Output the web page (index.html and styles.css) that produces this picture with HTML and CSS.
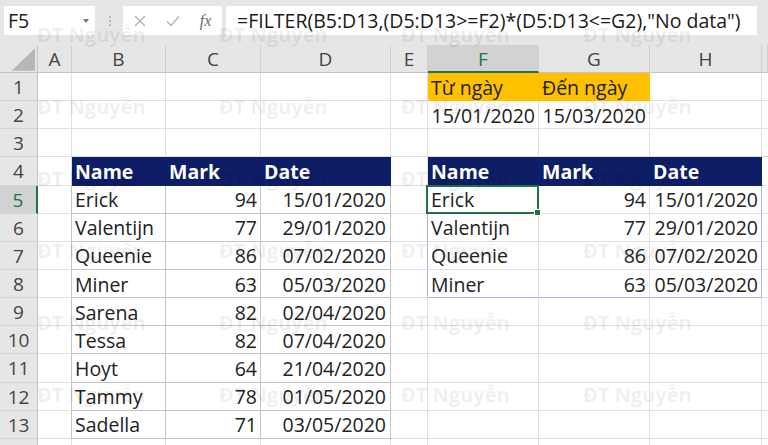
FILE: index.html
```html
<!DOCTYPE html>
<html lang="vi">
<head>
<meta charset="utf-8">
<title>FILTER</title>
<link rel="stylesheet" href="styles.css">
</head>
<body>
<div class="app">
  <div class="fbar">
    <div class="namebox"><span class="nb-text">F5</span><span class="nb-arrow"></span></div>
    <div class="sep"><i></i><i></i><i></i></div>
    <div class="fxbox">
      <span class="slot"><svg width="14" height="14" viewBox="0 0 14 14"><path d="M2 2 L12 12 M12 2 L2 12" stroke="#b4b4b4" stroke-width="1.4" fill="none"/></svg></span>
      <span class="slot"><svg width="16" height="14" viewBox="0 0 16 14"><path d="M2 7.5 L6 11.5 L14 2.5" stroke="#b4b4b4" stroke-width="1.4" fill="none"/></svg></span>
      <span class="slot fx">fx</span>
    </div>
    <div class="formula">=FILTER(B5:D13,(D5:D13&gt;=F2)*(D5:D13&lt;=G2),"No data")</div>
  </div>

  <div class="sheet">
    <!-- header -->
    <div class="ch corner"><svg width="38" height="27" viewBox="0 0 38 27"><polygon points="12,26 36,3 36,26" fill="#b7b7b7"/></svg></div>
    <div class="ch">A</div><div class="ch">B</div><div class="ch">C</div><div class="ch">D</div><div class="ch">E</div>
    <div class="ch csel">F</div><div class="ch">G</div><div class="ch">H</div><div class="ch"></div>

    <!-- 1 -->
    <div class="rh">1</div><div class="c"></div><div class="c"></div><div class="c"></div><div class="c"></div><div class="c"></div>
    <div class="c or">Từ ngày</div><div class="c or">Đến ngày</div><div class="c"></div><div class="c"></div>
    <!-- 2 -->
    <div class="rh">2</div><div class="c"></div><div class="c"></div><div class="c"></div><div class="c"></div><div class="c"></div>
    <div class="c r">15/01/2020</div><div class="c r">15/03/2020</div><div class="c"></div><div class="c"></div>
    <!-- 3 -->
    <div class="rh">3</div><div class="c"></div><div class="c"></div><div class="c"></div><div class="c"></div><div class="c"></div>
    <div class="c"></div><div class="c"></div><div class="c"></div><div class="c"></div>
    <!-- 4 -->
    <div class="rh">4</div><div class="c"></div>
    <div class="c th">Name</div><div class="c th">Mark</div><div class="c th">Date</div>
    <div class="c"></div>
    <div class="c th">Name</div><div class="c th">Mark</div><div class="c th">Date</div><div class="c"></div>
    <!-- 5 -->
    <div class="rh rsel">5</div><div class="c ga"></div>
    <div class="c gl">Erick</div><div class="c gl r">94</div><div class="c gl r dt">15/01/2020</div>
    <div class="c ge"></div>
    <div class="c sel">Erick</div><div class="c r">94</div><div class="c r gr">15/01/2020</div><div class="c"></div>
    <!-- 6 -->
    <div class="rh">6</div><div class="c ga"></div>
    <div class="c gl">Valentijn</div><div class="c gl r">77</div><div class="c gl r dt">29/01/2020</div>
    <div class="c ge"></div>
    <div class="c">Valentijn</div><div class="c r">77</div><div class="c r gr">29/01/2020</div><div class="c"></div>
    <!-- 7 -->
    <div class="rh">7</div><div class="c ga"></div>
    <div class="c gl">Queenie</div><div class="c gl r">86</div><div class="c gl r dt">07/02/2020</div>
    <div class="c ge"></div>
    <div class="c">Queenie</div><div class="c r">86</div><div class="c r gr">07/02/2020</div><div class="c"></div>
    <!-- 8 -->
    <div class="rh">8</div><div class="c ga"></div>
    <div class="c gl">Miner</div><div class="c gl r">63</div><div class="c gl r dt">05/03/2020</div>
    <div class="c ge"></div>
    <div class="c gb">Miner</div><div class="c r gb">63</div><div class="c r gr gb">05/03/2020</div><div class="c"></div>
    <!-- 9 -->
    <div class="rh">9</div><div class="c ga"></div>
    <div class="c gl">Sarena</div><div class="c gl r">82</div><div class="c gl r dt">02/04/2020</div>
    <div class="c"></div><div class="c"></div><div class="c"></div><div class="c"></div><div class="c"></div>
    <!-- 10 -->
    <div class="rh">10</div><div class="c ga"></div>
    <div class="c gl">Tessa</div><div class="c gl r">82</div><div class="c gl r dt">07/04/2020</div>
    <div class="c"></div><div class="c"></div><div class="c"></div><div class="c"></div><div class="c"></div>
    <!-- 11 -->
    <div class="rh">11</div><div class="c ga"></div>
    <div class="c gl">Hoyt</div><div class="c gl r">64</div><div class="c gl r dt">21/04/2020</div>
    <div class="c"></div><div class="c"></div><div class="c"></div><div class="c"></div><div class="c"></div>
    <!-- 12 -->
    <div class="rh">12</div><div class="c ga"></div>
    <div class="c gl">Tammy</div><div class="c gl r">78</div><div class="c gl r dt">01/05/2020</div>
    <div class="c"></div><div class="c"></div><div class="c"></div><div class="c"></div><div class="c"></div>
    <!-- 13 -->
    <div class="rh">13</div><div class="c ga"></div>
    <div class="c gl">Sadella</div><div class="c gl r">71</div><div class="c gl r dt">03/05/2020</div>
    <div class="c"></div><div class="c"></div><div class="c"></div><div class="c"></div><div class="c"></div>
    <!-- 14 -->
    <div class="rh"></div><div class="c"></div><div class="c"></div><div class="c"></div><div class="c"></div><div class="c"></div>
    <div class="c"></div><div class="c"></div><div class="c"></div><div class="c"></div>
  </div>

  <div class="wm">
    <span>ĐT Nguyễn</span><span>ĐT Nguyễn</span><span>ĐT Nguyễn</span><span>ĐT Nguyễn</span>
    <span>ĐT Nguyễn</span><span>ĐT Nguyễn</span><span>ĐT Nguyễn</span><span>ĐT Nguyễn</span>
    <span>ĐT Nguyễn</span><span>ĐT Nguyễn</span><span>ĐT Nguyễn</span><span>ĐT Nguyễn</span>
    <span>ĐT Nguyễn</span><span>ĐT Nguyễn</span><span>ĐT Nguyễn</span><span>ĐT Nguyễn</span>
    <span>ĐT Nguyễn</span><span>ĐT Nguyễn</span><span>ĐT Nguyễn</span><span>ĐT Nguyễn</span>
    <span>ĐT Nguyễn</span><span>ĐT Nguyễn</span><span>ĐT Nguyễn</span><span>ĐT Nguyễn</span>
  </div>
</div>
</body>
</html>
```

FILE: styles.css
```css
* { box-sizing: border-box; }
html, body { margin: 0; padding: 0; background: #ffffff; }
body { font-family: "Open Sans", "Liberation Sans", sans-serif; }

.app {
  position: relative;
  width: 768px;
  height: 445px;
  overflow: hidden;
  background: #ffffff;
}

/* formula bar */
.fbar {
  height: 45px;
  background: #e6e6e6;
  display: flex;
  align-items: flex-start;
  padding: 6px 0 0 4px;
}
.namebox {
  width: 91px;
  height: 29px;
  background: #ffffff;
  display: flex;
  align-items: center;
  justify-content: space-between;
  padding: 0 6px 0 4px;
}
.nb-text { font-size: 19.5px; color: #222; }
.nb-arrow {
  width: 0; height: 0;
  border-left: 3.5px solid transparent;
  border-right: 3.5px solid transparent;
  border-top: 4px solid #777;
}
.sep {
  width: 28px;
  height: 29px;
  display: flex;
  flex-direction: column;
  align-items: center;
  justify-content: center;
  gap: 2px;
  padding-left: 1px;
}
.sep i { display: block; width: 2px; height: 2px; background: #b8b8b8; }
.fxbox {
  width: 99px;
  height: 29px;
  background: #ffffff;
  display: flex;
  align-items: center;
}
.slot {
  width: 33px;
  height: 29px;
  display: flex;
  align-items: center;
  justify-content: center;
}
.fx {
  font-family: "Liberation Serif", "DejaVu Serif", serif;
  font-style: italic;
  font-size: 16px;
  color: #6a6a6a;
}
.formula {
  margin-left: 4px;
  width: 531px;
  height: 29px;
  background: #ffffff;
  padding-left: 11px;
  font-size: 19.5px;
  line-height: 29px;
  color: #1a1a1a;
  white-space: nowrap;
}

/* sheet */
.sheet {
  display: grid;
  grid-template-columns: 38px 34px 94px 95px 130px 37px 111px 111px 112px 6px;
  grid-template-rows: 28px repeat(14, 28.15px);
}
.c, .ch, .rh {
  border-right: 1px solid #e0e0e0;
  border-bottom: 1px solid #e0e0e0;
  display: flex;
  align-items: center;
  white-space: nowrap;
  overflow: hidden;
  font-size: 19.5px;
  color: #222;
  padding-top: 1px;
}
.c { padding-left: 3px; padding-right: 3px; }
.r { justify-content: flex-end; }
.dt { padding-right: 4px; }

.ch {
  background: #e6e6e6;
  border-right-color: #d0d0d0;
  border-bottom-color: #c4c4c4;
  justify-content: center;
  color: #444;
  font-size: 19px;
}
.corner { border-right-color: #c4c4c4; padding-top: 0; }
.rh {
  background: #e6e6e6;
  border-right-color: #c4c4c4;
  border-bottom-color: #d4d4d4;
  justify-content: center;
  color: #444;
  font-size: 19px;
}
.csel {
  background: #d2d2d2;
  color: #217346;
  border-bottom: 2px solid #217346;
}
.rsel {
  background: #d2d2d2;
  color: #217346;
  border-right: 2px solid #217346;
}

.or {
  background: #ffc000;
  border-right-color: #ffc000;
  border-bottom-color: #ffc000;
  color: #222;
}
.th {
  background: #0d1d66;
  border-right-color: #0d1d66;
  border-bottom-color: #0d1d66;
  color: #ffffff;
  font-weight: 700;
}
.gl { border-right-color: #c4c4c4; border-bottom-color: #c4c4c4; }
.ga { border-right-color: #c4c4c4; }
.ge { border-right-color: #aeb8de; }
.gr { border-right-color: #aeb8de; }
.gb { border-bottom-color: #aeb8de; }

.sel { position: relative; overflow: visible; }
.sel::after {
  content: "";
  position: absolute;
  left: -2px; top: -1px; right: -1px; bottom: -1px;
  border: 2px solid #217346;
}
.sel::before {
  content: "";
  position: absolute;
  right: -3px; bottom: -3px;
  width: 5px; height: 5px;
  background: #217346;
  border: 1px solid #ffffff;
  z-index: 2;
}

/* watermark */
.wm {
  position: absolute;
  left: 0; top: 0;
  width: 768px;
  display: grid;
  grid-template-columns: repeat(4, 182px);
  grid-auto-rows: 72px;
  padding: 22px 0 0 37px;
  pointer-events: none;
  font-weight: 700;
  font-size: 20px;
  line-height: 26px;
  color: rgba(0, 0, 0, 0.07);
  white-space: nowrap;
}
```
